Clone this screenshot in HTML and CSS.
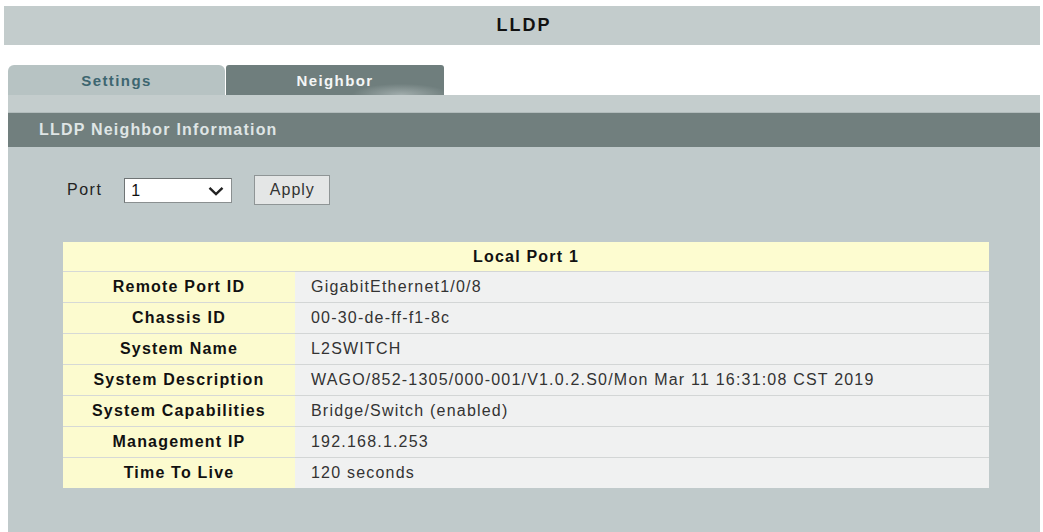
FILE: index.html
```html
<!DOCTYPE html>
<html>
<head>
<meta charset="utf-8">
<title>LLDP</title>
<link rel="stylesheet" href="styles.css">
</head>
<body>
<div class="page">
  <div class="titlebar">LLDP</div>
  <div class="tabs">
    <div class="tab tab-off">Settings</div>
    <div class="tab tab-on">Neighbor</div>
  </div>
  <div class="panel">
    <div class="strip"></div>
    <div class="section-head">LLDP Neighbor Information</div>
    <div class="controls">
      <span class="port-label">Port</span>
      <span class="select-wrap">
        <select class="port-select"><option>1</option></select>
        <svg class="chev" width="16" height="10" viewBox="0 0 16 10"><path d="M1.5 1.8 L8 8 L14.5 1.8" fill="none" stroke="#222" stroke-width="2.4"/></svg>
      </span>
      <button class="apply">Apply</button>
    </div>
    <table class="info">
      <tr><th colspan="2" class="head">Local Port 1</th></tr>
      <tr><th>Remote Port ID</th><td>GigabitEthernet1/0/8</td></tr>
      <tr><th>Chassis ID</th><td>00-30-de-ff-f1-8c</td></tr>
      <tr><th>System Name</th><td>L2SWITCH</td></tr>
      <tr><th>System Description</th><td>WAGO/852-1305/000-001/V1.0.2.S0/Mon Mar 11 16:31:08 CST 2019</td></tr>
      <tr><th>System Capabilities</th><td>Bridge/Switch (enabled)</td></tr>
      <tr><th>Management IP</th><td>192.168.1.253</td></tr>
      <tr><th>Time To Live</th><td>120 seconds</td></tr>
    </table>
  </div>
</div>
</body>
</html>
```
FILE: styles.css
```css
html, body {
  margin: 0;
  padding: 0;
  background: #ffffff;
  font-family: "Liberation Sans", Arial, sans-serif;
  overflow: hidden;
}
.page {
  padding: 6px 3px 0 4px;
}
.titlebar {
  height: 39px;
  background: #c3cccc;
  color: #111;
  font-weight: bold;
  font-size: 18px;
  letter-spacing: 2px;
  display: flex;
  align-items: center;
  justify-content: center;
  padding-left: 4px;
}
.tabs {
  margin: 20px 0 0 4px;
  display: flex;
  gap: 1px;
  height: 30px;
}
.tab {
  width: 217px;
  border-radius: 6px 6px 0 0;
  font-weight: bold;
  font-size: 15px;
  letter-spacing: 1.4px;
  display: flex;
  align-items: center;
  justify-content: center;
}
.tab-off {
  background: #b7c3c3;
  color: #3d6670;
}
.tab-on {
  width: 218px;
  border-radius: 3px 3px 0 0;
  color: #f4f6f6;
  background:
    radial-gradient(ellipse 70px 16px at 175px 30px, rgba(195,205,205,0.6), rgba(195,205,205,0) 70%),
    #6f7e7d;
}
.panel {
  margin-left: 4px;
  background: #c0cacb;
  height: 440px;
}
.strip {
  height: 17px;
  background: #c4cdcd;
  border-bottom: 1px solid #b2bcbc;
}
.section-head {
  height: 34px;
  background: #717f7e;
  color: #dfe5e5;
  font-weight: bold;
  font-size: 16px;
  letter-spacing: 1.2px;
  display: flex;
  align-items: center;
  padding-left: 31px;
}
.controls {
  display: flex;
  align-items: center;
  padding: 28px 0 0 59px;
  height: 30px;
}
.port-label {
  font-size: 16px;
  letter-spacing: 1.5px;
  color: #222;
  margin-right: 22px;
}
.select-wrap {
  position: relative;
  display: inline-block;
}
.port-select {
  appearance: none;
  -webkit-appearance: none;
  width: 108px;
  height: 25px;
  border: 1px solid #8a8f90;
  border-top-color: #6f7475;
  border-left-color: #6f7475;
  border-radius: 0;
  background: #ffffff;
  font-family: "Liberation Sans", Arial, sans-serif;
  font-size: 16px;
  color: #111;
  padding: 0 0 0 6px;
  display: block;
}
.chev {
  position: absolute;
  right: 8px;
  top: 8px;
  pointer-events: none;
}
.apply {
  margin-left: 22px;
  width: 76px;
  height: 30px;
  border: 1px solid #8f9596;
  border-radius: 0;
  background: #e4e6e6;
  font-family: "Liberation Sans", Arial, sans-serif;
  font-size: 16px;
  letter-spacing: 1px;
  color: #333;
}
.info {
  margin: 37px 0 0 55px;
  width: 926px;
  border-collapse: collapse;
  font-size: 16px;
  letter-spacing: 1.2px;
}
.info th, .info td {
  height: 30px;
  padding: 0;
  border-top: 1px solid #d6d9d6;
}
.info th {
  width: 232px;
  background: #fcfbcf;
  color: #111;
  font-weight: bold;
  text-align: center;
}
.info th.head {
  height: 29px;
  border-top: none;
  background: #fdfcd0;
}
.info td {
  background: #f0f1f1;
  color: #333;
  padding-left: 16px;
  border-top-color: #d3d6d6;
}
```
